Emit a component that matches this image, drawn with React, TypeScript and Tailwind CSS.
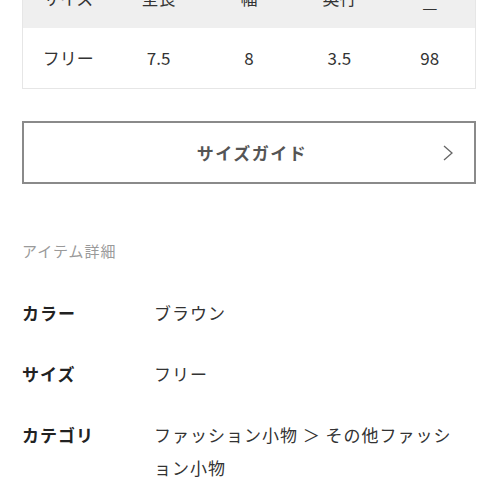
const headers = ["サイズ", "全長", "幅", "奥行", ""];
const values = ["フリー", "7.5", "8", "3.5", "98"];

const details = [
  { label: "カラー", value: "ブラウン" },
  { label: "サイズ", value: "フリー" },
  { label: "カテゴリ", value: "ファッション小物 ＞ その他ファッション小物" },
];

export default function App() {
  return (
    <div
      className="h-[498px] w-[498px] overflow-hidden bg-white px-[22px] text-[#333]"
      style={{ fontFamily: '"Noto Sans CJK JP", "Noto Sans", sans-serif' }}
    >
      {/* Size table */}
      <div className="mt-[-33px] border border-[#e6e6e6]">
        <div className="grid h-[60px] grid-cols-5 bg-[#efefef]">
          {headers.map((h, i) => (
            <div key={i} className="flex items-center justify-center text-[17px]">
              {h ? h : <span className="mt-[18px]">—</span>}
            </div>
          ))}
        </div>
        <div className="grid h-[60px] grid-cols-5 bg-white">
          {values.map((v, i) => (
            <div key={i} className="flex items-center justify-center text-[17px]">
              {v}
            </div>
          ))}
        </div>
      </div>

      {/* Size guide button */}
      <button className="relative mt-[32px] flex h-[63px] w-full items-center justify-center border-2 border-[#8a8a8a] bg-white">
        <span className="ml-[6px] text-[17px] font-bold tracking-[1.5px] text-[#555]">サイズガイド</span>
        <svg
          className="absolute right-[20px] top-1/2 -translate-y-1/2"
          width="12"
          height="18"
          viewBox="0 0 12 18"
          fill="none"
        >
          <path d="M2 2l8 7-8 7" stroke="#666" strokeWidth="1.3" />
        </svg>
      </button>

      {/* Item details */}
      <p className="mt-[57px] text-[15px] leading-[20px] tracking-[1px] text-[#9a9a9a]">アイテム詳細</p>

      <div className="mt-[35px] flex flex-col gap-[28px]">
        {details.map((d) => (
          <div key={d.label} className="flex text-[17px] leading-[33px] tracking-[1px]">
            <div className="w-[132px] shrink-0 font-bold text-[#222]">{d.label}</div>
            <div className="w-[312px] text-[#333]">{d.value}</div>
          </div>
        ))}
      </div>
    </div>
  );
}
